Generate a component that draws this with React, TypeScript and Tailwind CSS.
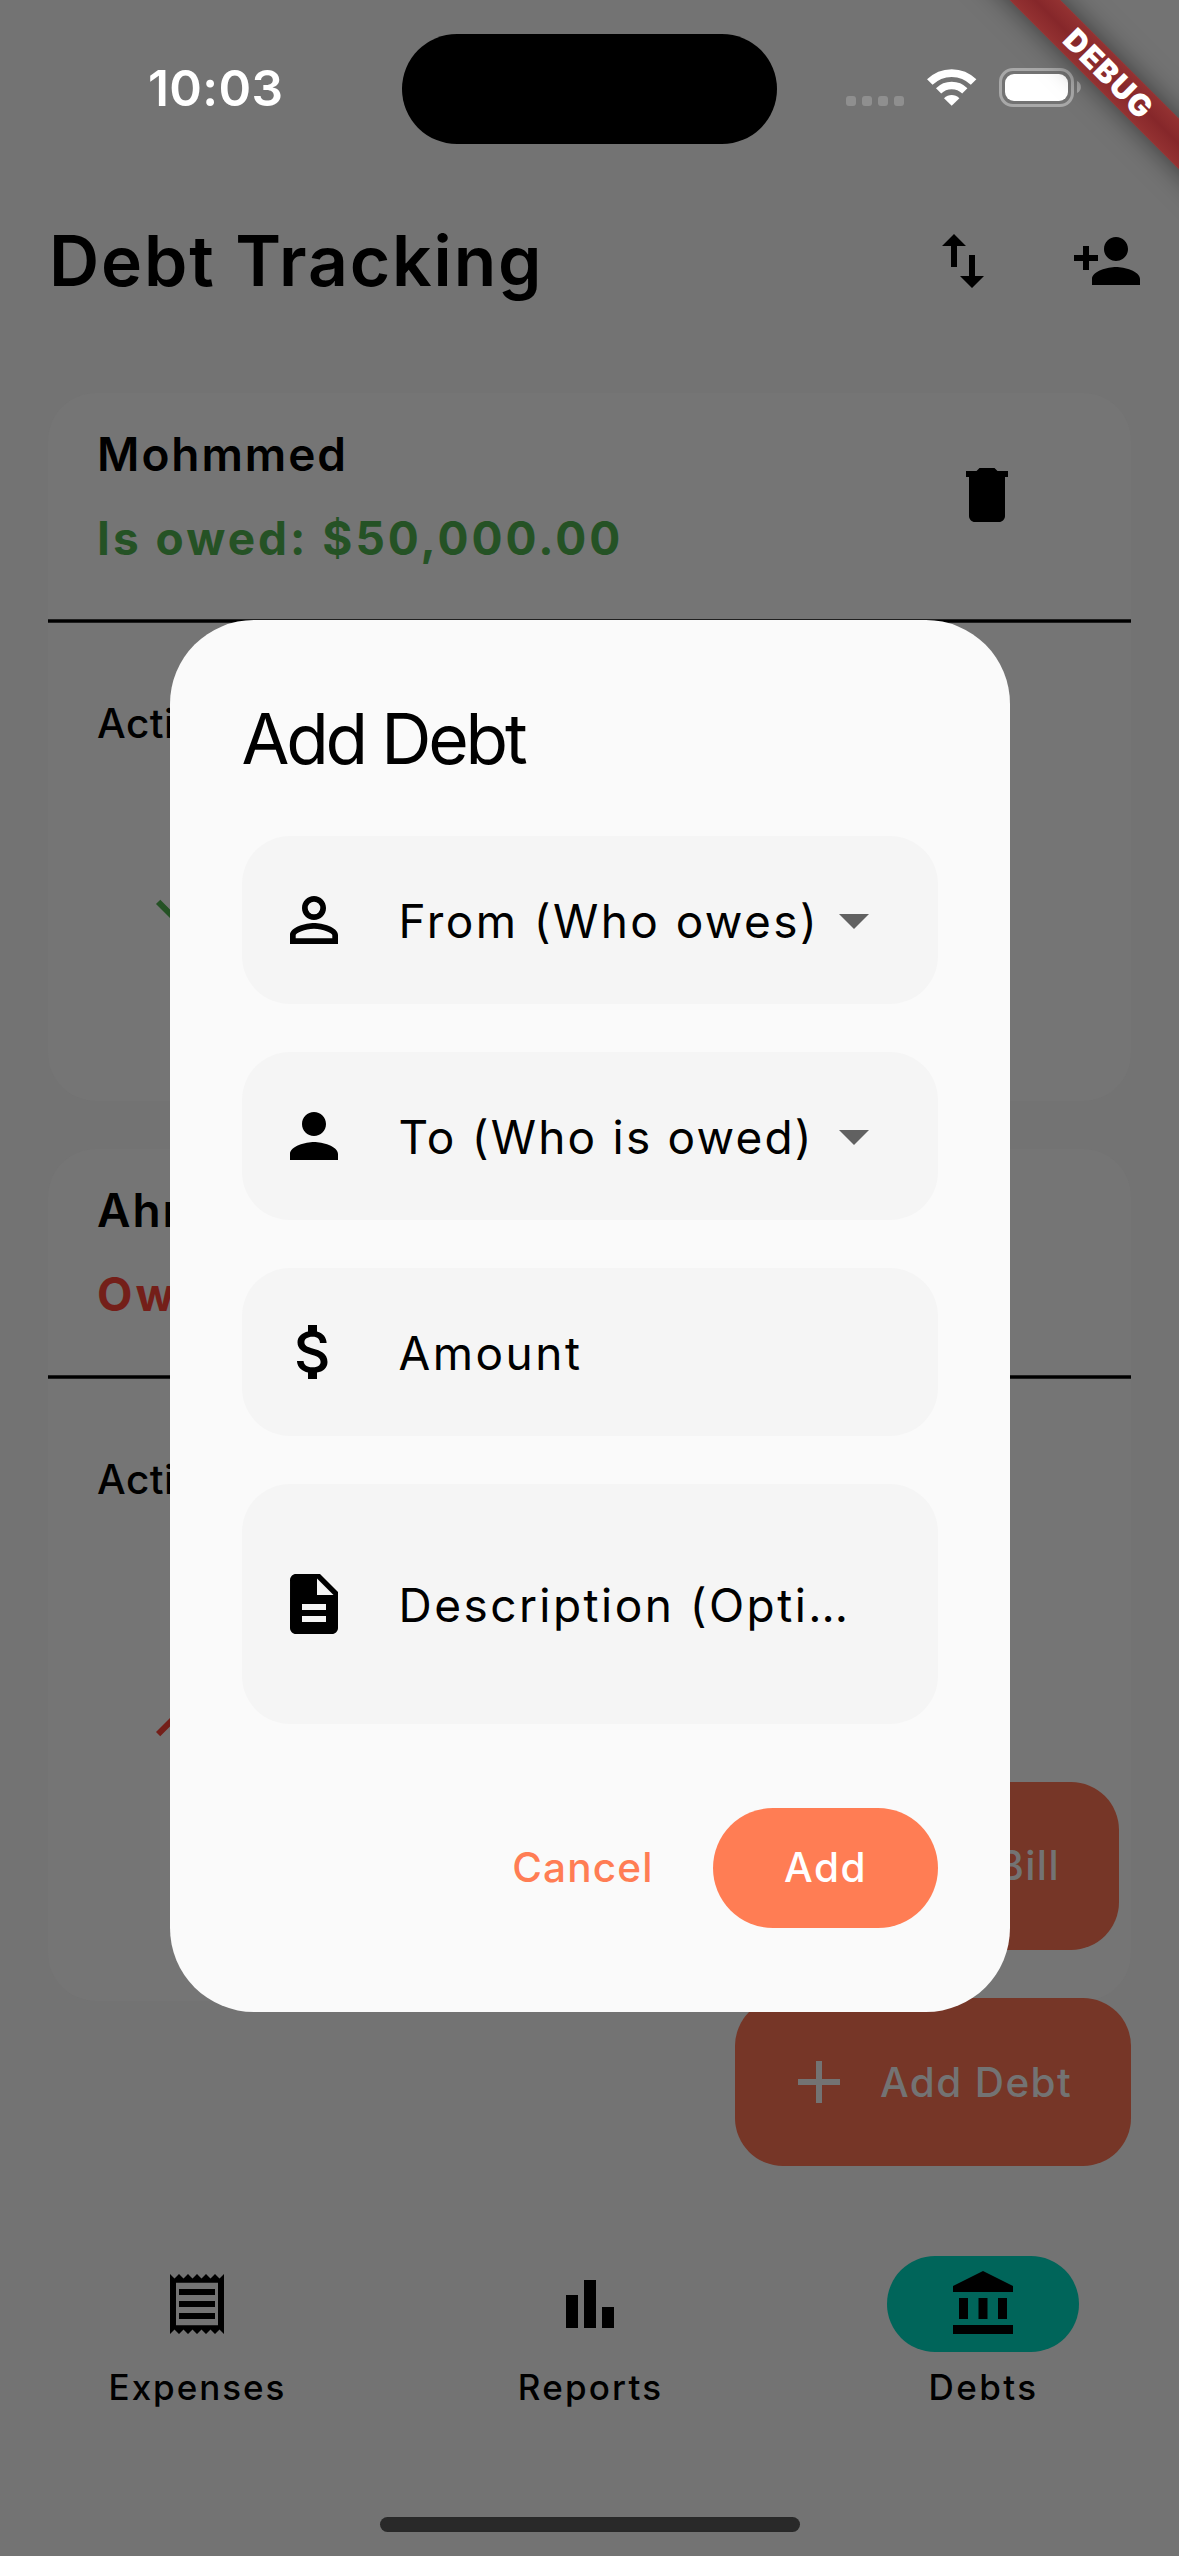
import React from "react";

function Icon({ d, className = "" }: { d: string; className?: string }) {
  return (
    <svg viewBox="0 0 24 24" fill="currentColor" className={`size-[72px] shrink-0 ${className}`}>
      <path d={d} />
    </svg>
  );
}

const PATHS = {
  swap: "M16 17.01V10h-2v7.01h-3L15 21l4-3.99h-3zM9 3L5 6.99h3V14h2V6.99h3L9 3z",
  personAdd:
    "M15 12c2.21 0 4-1.79 4-4s-1.79-4-4-4-4 1.79-4 4 1.79 4 4 4zm-9-2V7H4v3H1v2h3v3h2v-3h3v-2H6zm9 4c-2.67 0-8 1.34-8 4v2h16v-2c0-2.66-5.33-4-8-4z",
  trash: "M6 19c0 1.1.9 2 2 2h8c1.1 0 2-.9 2-2V6H6v13zM19 4h-3.5l-1-1h-5l-1 1H5v2h14V4z",
  down: "M20 12l-1.41-1.41L13 16.17V4h-2v12.17l-5.58-5.59L4 12l8 8 8-8z",
  up: "M4 12l1.41 1.41L11 7.83V20h2V7.83l5.58 5.59L20 12l-8-8-8 8z",
  personOutline:
    "M12 5.9a2.1 2.1 0 1 1 0 4.2 2.1 2.1 0 0 1 0-4.2m0 9c2.97 0 6.1 1.46 6.1 2.1v1.1H5.9V17c0-.64 3.13-2.1 6.1-2.1M12 4C9.79 4 8 5.79 8 8s1.79 4 4 4 4-1.79 4-4-1.79-4-4-4zm0 9c-2.67 0-8 1.34-8 4v3h16v-3c0-2.66-5.33-4-8-4z",
  person:
    "M12 12c2.21 0 4-1.79 4-4s-1.79-4-4-4-4 1.79-4 4 1.79 4 4 4zm0 2c-2.67 0-8 1.34-8 4v2h16v-2c0-2.66-5.33-4-8-4z",
  dollar:
    "M11.8 10.9c-2.27-.59-3-1.2-3-2.15 0-1.09 1.01-1.85 2.7-1.85 1.78 0 2.44.85 2.5 2.1h2.21c-.07-1.72-1.12-3.3-3.21-3.81V3h-3v2.16c-1.94.42-3.5 1.68-3.5 3.61 0 2.31 1.91 3.46 4.7 4.13 2.5.6 3 1.48 3 2.41 0 .69-.49 1.79-2.7 1.79-2.06 0-2.87-.92-2.98-2.1h-2.2c.12 2.19 1.76 3.42 3.68 3.83V21h3v-2.15c1.95-.37 3.5-1.5 3.5-3.55 0-2.84-2.43-3.81-4.7-4.4z",
  note: "M14 2H6c-1.1 0-1.99.9-1.99 2L4 20c0 1.1.89 2 1.99 2H18c1.1 0 2-.9 2-2V8l-6-6zm2 16H8v-2h8v2zm0-4H8v-2h8v2zm-3-5V3.5L18.5 9H13z",
  caret: "M7 10l5 5 5-5z",
  plus: "M19 13h-6v6h-2v-6H5v-2h6V5h2v6h6v2z",
  receipt:
    "M19.5 3.5L18 2l-1.5 1.5L15 2l-1.5 1.5L12 2l-1.5 1.5L9 2 7.5 3.5 6 2 4.5 3.5 3 2v20l1.5-1.5L6 22l1.5-1.5L9 22l1.5-1.5L12 22l1.5-1.5L15 22l1.5-1.5L18 22l1.5-1.5L21 22V2l-1.5 1.5zM19 19.09H5V4.91h14v14.18zM6 15h12v2H6zm0-4h12v2H6zm0-4h12v2H6z",
  chart: "M4 9h4v11H4zM16 13h4v7h-4zM10 4h4v16h-4z",
  bank: "M4 10h3v7H4zM10.5 10h3v7h-3zM17 10h3v7h-3zM2 19h20v3H2zM12 1L2 6v2h20V6z",
};

function StatusBar() {
  return (
    <div className="flex h-[177px] shrink-0 text-white">
      <div className="flex w-[402px] items-start pl-[148px] pt-[57.5px]">
        <span className="text-[49.5px] font-semibold leading-[60px] tracking-[0.37px]">10:03</span>
      </div>
      <div className="mt-[34px] h-[110px] w-[375px] rounded-full bg-black" />
      <div className="flex items-start pl-[69px]">
        <div className="mt-[96px] flex gap-[6px]">
          {[0, 1, 2, 3].map((i) => (
            <div key={i} className="size-[10px] rounded-[3px] bg-[#8f8f8f]" />
          ))}
        </div>
        <svg viewBox="0 0 52 40" className="ml-[22px] mt-[67px] h-[40px] w-[52px]">
          <g fill="none" stroke="#fff">
            <path d="M3.8 15.1a31 31 0 0 1 43.8 0" strokeWidth="7.8" />
            <path d="M12.6 23.9a18.6 18.6 0 0 1 26.2 0" strokeWidth="7.4" />
          </g>
          <path d="M25.7 38.8L18 31.2c4.4-4.4 11-4.4 15.4 0z" fill="#fff" />
        </svg>
        <div className="ml-[21px] mt-[68px] h-[39px] w-[75px] rounded-[14px] border-[3px] border-[#a8a8a8] p-[3px]">
          <div className="h-[27px] w-[63px] rounded-[9px] bg-white" />
        </div>
        <svg viewBox="0 0 4 12" className="ml-[3px] mt-[81px] h-[12px] w-[4px]">
          <path d="M0 0a6.6 6.6 0 0 1 0 12z" fill="#a8a8a8" />
        </svg>
      </div>
    </div>
  );
}

function DebtCard({
  name,
  balance,
  tone,
  arrow,
  height,
}: {
  name: string;
  balance: string;
  tone: string;
  arrow: string;
  height: string;
}) {
  return (
    <section className={`mx-12 shrink-0 overflow-hidden rounded-[48px] bg-[#757575] ${height}`}>
      <div className="flex h-[226px] pl-[48px]">
        <div className="w-[855px] pt-[30px]">
          <div className="h-[62px] pl-px text-[46px] font-semibold leading-[62px] tracking-[1.95px]">{name}</div>
          <div className={`mt-[22px] h-[62px] pl-px text-[46px] font-bold leading-[62px] tracking-[3px] ${tone}`}>
            {balance}
          </div>
        </div>
        <Icon d={PATHS.trash} className="mt-[66px]" />
      </div>
      <div className="h-[4px] border-y border-[#1f1f1f] bg-black" />
      <div className="pl-[49px] pt-[70.5px] text-[40.5px] font-medium leading-[60px] tracking-[0.5px]">Active Debts</div>
      <div className={`pl-[96px] ${tone}`}>
        <Icon d={arrow} className={arrow === PATHS.down ? "mt-[114px]" : "mt-[186px]"} />
      </div>
    </section>
  );
}

function Field({
  icon,
  label,
  tracking,
  caret = false,
  tall = false,
}: {
  icon: string;
  label: string;
  tracking: string;
  caret?: boolean;
  tall?: boolean;
}) {
  return (
    <div className={`flex shrink-0 items-center rounded-[48px] bg-[#f5f5f5] pl-[36px] ${tall ? "h-[240px]" : "h-[168px]"}`}>
      <Icon d={icon} />
      <div className={`ml-[49px] mt-[3px] whitespace-nowrap text-[46px] leading-[60px] ${caret ? "w-[419px]" : "w-[500px]"} ${tracking}`}>
        {label}
      </div>
      {caret && <Icon d={PATHS.caret} className="text-[#616161]" />}
    </div>
  );
}

function NavItem({ icon, label, tracking, active = false }: { icon: string; label: string; tracking: string; active?: boolean }) {
  return (
    <div className="flex flex-1 flex-col items-center">
      <div className={`flex h-[96px] w-[192px] items-center justify-center rounded-full ${active ? "bg-[#00655a]" : ""}`}>
        <Icon d={icon} />
      </div>
      <div className={`mt-[10.5px] pl-[2px] text-[35px] font-medium leading-[48px] ${tracking}`}>{label}</div>
    </div>
  );
}

export default function App() {
  return (
    <div className="relative flex h-[2556px] w-[1179px] flex-col overflow-hidden bg-[#737373] font-['Inter',sans-serif] text-black">
      <StatusBar />

      <header className="flex h-[168px] shrink-0 items-center pl-[49px]">
        <h1 className="w-[878px] text-[69.5px] font-semibold leading-[84px] tracking-[1.9px]">Debt Tracking</h1>
        <Icon d={PATHS.swap} />
        <Icon d={PATHS.personAdd} className="ml-[72px]" />
      </header>

      <main className="flex h-[1911px] shrink-0 flex-col gap-[48px] pt-[48px]">
        <DebtCard name="Mohmmed" balance="Is owed: $50,000.00" tone="text-[#255225]" arrow={PATHS.down} height="h-[708px]" />
        <DebtCard name="Ahmed" balance="Owes: $50,000.00" tone="text-[#741f19]" arrow={PATHS.up} height="h-[852px]" />
      </main>

      <nav className="flex flex-1">
        <NavItem icon={PATHS.receipt} label="Expenses" tracking="tracking-[1.96px]" />
        <NavItem icon={PATHS.chart} label="Reports" tracking="tracking-[2.2px]" />
        <NavItem icon={PATHS.bank} label="Debts" tracking="tracking-[2.4px]" active />
      </nav>
      <div className="mx-auto mb-[24px] h-[15px] w-[420px] shrink-0 rounded-full bg-[#292929]" />

      {/* Floating actions */}
      <div className="absolute right-[48px] top-[1782px] flex flex-col items-end gap-[48px] text-[40.5px] font-medium leading-[60px] tracking-[1.38px] text-[#737373]">
        <button className="mr-[12px] flex h-[168px] items-center rounded-[48px] bg-[#763627] pl-[48px] pr-[59px]">
          <Icon d={PATHS.receipt} />
          <span className="ml-[24px]">Split Bill</span>
        </button>
        <button className="flex h-[168px] w-[396px] items-center rounded-[48px] bg-[#763627] pl-[48px]">
          <Icon d={PATHS.plus} />
          <span className="ml-[25px] pt-px">Add Debt</span>
        </button>
      </div>

      {/* Add debt dialog */}
      <div
        role="dialog"
        className="absolute left-[169.5px] top-[619.5px] flex h-[1392px] w-[840px] flex-col rounded-[84px] bg-[#fafafa] px-[72px] pt-[72px]"
      >
        <h2 className="h-[144px] pt-[5.5px] text-[69.5px] font-normal leading-[84px] tracking-[-3.2px]">Add Debt</h2>
        <div className="flex flex-col gap-[48px]">
          <Field icon={PATHS.personOutline} label="From (Who owes)" tracking="tracking-[2.42px]" caret />
          <Field icon={PATHS.person} label="To (Who is owed)" tracking="tracking-[2.2px]" caret />
          <Field icon={PATHS.dollar} label="Amount" tracking="tracking-[2.5px]" />
          <Field icon={PATHS.note} label="Description (Opti…" tracking="tracking-[2.45px]" tall />
        </div>
        <div className="mt-[84px] flex h-[120px] items-center justify-end text-[40.5px] font-medium leading-[60px]">
          <button className="mr-[59px] pt-px tracking-[1.15px] text-[#ff7d54]">Cancel</button>
          <button className="h-[120px] w-[225px] rounded-full bg-[#ff7d54] pl-px pt-px tracking-[1.5px] text-white">Add</button>
        </div>
      </div>

      {/* Corner ribbon */}
      <div className="absolute left-[907px] top-[53.5px] flex h-[36px] w-[400px] rotate-45 items-center justify-center bg-linear-to-b from-[#943232] via-[#86272a] to-[#943232] shadow-[0_0_28px_rgba(0,0,0,0.5)]">
        <span className="pl-[5px] text-[30.5px] font-black leading-[36px] tracking-[1.3px] text-white">DEBUG</span>
      </div>
    </div>
  );
}
